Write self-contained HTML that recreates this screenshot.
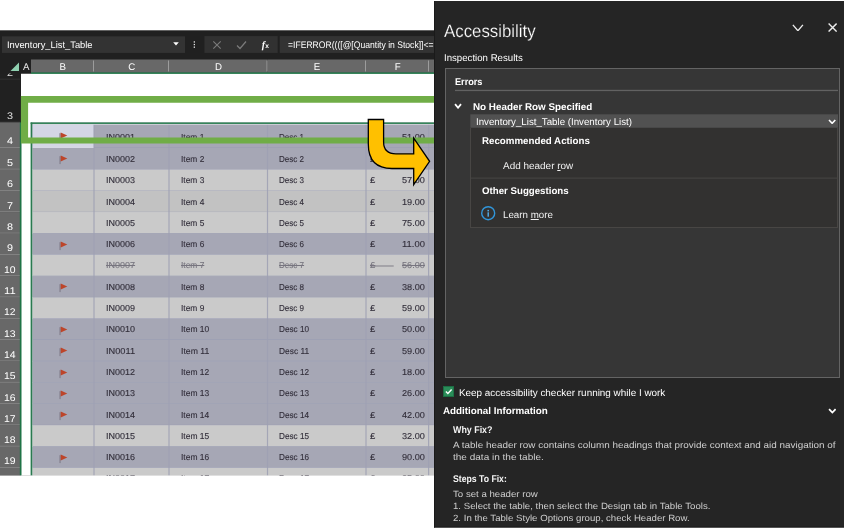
<!DOCTYPE html><html><head><meta charset="utf-8"><title>Accessibility</title><style>
html,body{margin:0;padding:0;background:#fff}body{width:844px;height:529px;position:relative;overflow:hidden;font-family:"Liberation Sans",sans-serif}
#r{position:absolute;left:0;top:0;width:844px;height:529px;overflow:hidden;will-change:transform}#r>div,#r>svg,#r>span{position:absolute;display:block}
#r>span{white-space:nowrap;line-height:1;transform-origin:0 0;text-rendering:geometricPrecision}
u{text-decoration:underline;text-underline-offset:1px}
</style></head><body><div id="r">
<svg style="left:0;top:0" width="844" height="529" viewBox="0 0 844 529">
<rect x="0" y="30.3" width="434" height="445.3" fill="#202020"/>
<rect x="21" y="73.5" width="413" height="402.1" fill="#fff"/>
<rect x="2" y="36.3" width="183" height="16.6" fill="#333"/>
<rect x="204.4" y="36.1" width="73.3" height="16.8" fill="#313131"/>
<rect x="279.7" y="36.1" width="154.3" height="16.8" fill="#333"/>
<rect x="0" y="58.2" width="20" height="21.3" fill="#212121"/>
<rect x="0" y="78.8" width="20" height="1" fill="#3c3c3c"/>
<rect x="0" y="79.5" width="20" height="42.9" fill="#212121"/>
<rect x="0" y="121.7" width="20" height="1" fill="#3c3c3c"/>
<rect x="0" y="122.4" width="20" height="25.6" fill="#686868"/>
<rect x="0" y="147.3" width="20" height="1" fill="#8e8e8e"/>
<rect x="0" y="148" width="20" height="21.5" fill="#686868"/>
<rect x="0" y="168.8" width="20" height="1" fill="#8e8e8e"/>
<rect x="0" y="169.5" width="20" height="21.31" fill="#686868"/>
<rect x="0" y="190.11" width="20" height="1" fill="#8e8e8e"/>
<rect x="0" y="190.81" width="20" height="21.31" fill="#686868"/>
<rect x="0" y="211.42" width="20" height="1" fill="#8e8e8e"/>
<rect x="0" y="212.12" width="20" height="21.31" fill="#686868"/>
<rect x="0" y="232.73" width="20" height="1" fill="#8e8e8e"/>
<rect x="0" y="233.43" width="20" height="21.31" fill="#686868"/>
<rect x="0" y="254.04" width="20" height="1" fill="#8e8e8e"/>
<rect x="0" y="254.74" width="20" height="21.31" fill="#686868"/>
<rect x="0" y="275.35" width="20" height="1" fill="#8e8e8e"/>
<rect x="0" y="276.05" width="20" height="21.31" fill="#686868"/>
<rect x="0" y="296.66" width="20" height="1" fill="#8e8e8e"/>
<rect x="0" y="297.36" width="20" height="21.31" fill="#686868"/>
<rect x="0" y="317.97" width="20" height="1" fill="#8e8e8e"/>
<rect x="0" y="318.67" width="20" height="21.31" fill="#686868"/>
<rect x="0" y="339.28" width="20" height="1" fill="#8e8e8e"/>
<rect x="0" y="339.98" width="20" height="21.31" fill="#686868"/>
<rect x="0" y="360.59" width="20" height="1" fill="#8e8e8e"/>
<rect x="0" y="361.29" width="20" height="21.31" fill="#686868"/>
<rect x="0" y="381.9" width="20" height="1" fill="#8e8e8e"/>
<rect x="0" y="382.6" width="20" height="21.31" fill="#686868"/>
<rect x="0" y="403.21" width="20" height="1" fill="#8e8e8e"/>
<rect x="0" y="403.91" width="20" height="21.31" fill="#686868"/>
<rect x="0" y="424.52" width="20" height="1" fill="#8e8e8e"/>
<rect x="0" y="425.22" width="20" height="21.31" fill="#686868"/>
<rect x="0" y="445.83" width="20" height="1" fill="#8e8e8e"/>
<rect x="0" y="446.53" width="20" height="21.31" fill="#686868"/>
<rect x="0" y="467.14" width="20" height="1" fill="#8e8e8e"/>
<rect x="0" y="467.84" width="20" height="21.31" fill="#686868"/>
<rect x="0" y="488.45" width="20" height="1" fill="#8e8e8e"/>
<rect x="19.8" y="122.4" width="1.7" height="353.2" fill="#1f7346"/>
<rect x="32.3" y="122.4" width="401.7" height="25.6" fill="#a6a7b5"/>
<rect x="33" y="147.6" width="401" height="1" fill="#969ab2"/>
<rect x="32.3" y="148" width="401.7" height="21.5" fill="#a6a7b5"/>
<rect x="33" y="169.1" width="401" height="1" fill="#969ab2"/>
<rect x="32.3" y="169.5" width="401.7" height="21.31" fill="#cacaca"/>
<rect x="33" y="190.41" width="401" height="1" fill="#a3a6b8"/>
<rect x="32.3" y="190.81" width="401.7" height="21.31" fill="#c2c2c2"/>
<rect x="33" y="211.72" width="401" height="1" fill="#a3a6b8"/>
<rect x="32.3" y="212.12" width="401.7" height="21.31" fill="#cacaca"/>
<rect x="33" y="233.03" width="401" height="1" fill="#a3a6b8"/>
<rect x="32.3" y="233.43" width="401.7" height="21.31" fill="#a6a7b5"/>
<rect x="33" y="254.34" width="401" height="1" fill="#969ab2"/>
<rect x="32.3" y="254.74" width="401.7" height="21.31" fill="#cacaca"/>
<rect x="33" y="275.65" width="401" height="1" fill="#a3a6b8"/>
<rect x="32.3" y="276.05" width="401.7" height="21.31" fill="#a6a7b5"/>
<rect x="33" y="296.96" width="401" height="1" fill="#969ab2"/>
<rect x="32.3" y="297.36" width="401.7" height="21.31" fill="#cacaca"/>
<rect x="33" y="318.27" width="401" height="1" fill="#a3a6b8"/>
<rect x="32.3" y="318.67" width="401.7" height="21.31" fill="#a6a7b5"/>
<rect x="33" y="339.58" width="401" height="1" fill="#969ab2"/>
<rect x="32.3" y="339.98" width="401.7" height="21.31" fill="#a6a7b5"/>
<rect x="33" y="360.89" width="401" height="1" fill="#969ab2"/>
<rect x="32.3" y="361.29" width="401.7" height="21.31" fill="#a6a7b5"/>
<rect x="33" y="382.2" width="401" height="1" fill="#969ab2"/>
<rect x="32.3" y="382.6" width="401.7" height="21.31" fill="#a6a7b5"/>
<rect x="33" y="403.51" width="401" height="1" fill="#969ab2"/>
<rect x="32.3" y="403.91" width="401.7" height="21.31" fill="#a6a7b5"/>
<rect x="33" y="424.82" width="401" height="1" fill="#969ab2"/>
<rect x="32.3" y="425.22" width="401.7" height="21.31" fill="#cacaca"/>
<rect x="33" y="446.13" width="401" height="1" fill="#a3a6b8"/>
<rect x="32.3" y="446.53" width="401.7" height="21.31" fill="#a6a7b5"/>
<rect x="33" y="467.44" width="401" height="1" fill="#969ab2"/>
<rect x="32.3" y="467.84" width="401.7" height="21.31" fill="#cacaca"/>
<rect x="33" y="488.75" width="401" height="1" fill="#a3a6b8"/>
<rect x="32.3" y="124.4" width="61.7" height="22.4" fill="#d4d6e5"/>
<rect x="32.3" y="146.6" width="61.7" height="1.2" fill="#e4e5f0"/>
<rect x="93.4" y="124" width="1.2" height="351.6" fill="#9da0b3" opacity=".85"/>
<rect x="168.4" y="124" width="1.2" height="351.6" fill="#9da0b3" opacity=".85"/>
<rect x="266.9" y="124" width="1.2" height="351.6" fill="#9da0b3" opacity=".85"/>
<rect x="365.4" y="124" width="1.2" height="351.6" fill="#9da0b3" opacity=".85"/>
<rect x="428" y="124" width="1.2" height="351.6" fill="#9da0b3" opacity=".85"/>
<rect x="30.6" y="122.4" width="403.4" height="1.6" fill="#35855a"/>
<rect x="30.6" y="122.4" width="1.7" height="353.2" fill="#2a7a50"/>
<rect x="33" y="124.3" width="401" height="0.6" fill="#e4e4ea"/>
</svg>
<svg style="left:58.9px;top:131.90px" width="9.5" height="10" viewBox="0 0 9.5 10"><rect x="0.4" y="1.2" width="1.3" height="7.9" fill="#85828f"/><path d="M1.7 0.5 L8.3 3.5 L1.7 6.6 Z" fill="#bd452a"/></svg>
<svg style="left:58.9px;top:155.40px" width="9.5" height="10" viewBox="0 0 9.5 10"><rect x="0.4" y="1.2" width="1.3" height="7.9" fill="#85828f"/><path d="M1.7 0.5 L8.3 3.5 L1.7 6.6 Z" fill="#bd452a"/></svg>
<svg style="left:58.9px;top:240.74px" width="9.5" height="10" viewBox="0 0 9.5 10"><rect x="0.4" y="1.2" width="1.3" height="7.9" fill="#85828f"/><path d="M1.7 0.5 L8.3 3.5 L1.7 6.6 Z" fill="#bd452a"/></svg>
<svg style="left:58.9px;top:283.36px" width="9.5" height="10" viewBox="0 0 9.5 10"><rect x="0.4" y="1.2" width="1.3" height="7.9" fill="#85828f"/><path d="M1.7 0.5 L8.3 3.5 L1.7 6.6 Z" fill="#bd452a"/></svg>
<svg style="left:58.9px;top:325.97px" width="9.5" height="10" viewBox="0 0 9.5 10"><rect x="0.4" y="1.2" width="1.3" height="7.9" fill="#85828f"/><path d="M1.7 0.5 L8.3 3.5 L1.7 6.6 Z" fill="#bd452a"/></svg>
<svg style="left:58.9px;top:347.28px" width="9.5" height="10" viewBox="0 0 9.5 10"><rect x="0.4" y="1.2" width="1.3" height="7.9" fill="#85828f"/><path d="M1.7 0.5 L8.3 3.5 L1.7 6.6 Z" fill="#bd452a"/></svg>
<svg style="left:58.9px;top:368.59px" width="9.5" height="10" viewBox="0 0 9.5 10"><rect x="0.4" y="1.2" width="1.3" height="7.9" fill="#85828f"/><path d="M1.7 0.5 L8.3 3.5 L1.7 6.6 Z" fill="#bd452a"/></svg>
<svg style="left:58.9px;top:389.90px" width="9.5" height="10" viewBox="0 0 9.5 10"><rect x="0.4" y="1.2" width="1.3" height="7.9" fill="#85828f"/><path d="M1.7 0.5 L8.3 3.5 L1.7 6.6 Z" fill="#bd452a"/></svg>
<svg style="left:58.9px;top:411.21px" width="9.5" height="10" viewBox="0 0 9.5 10"><rect x="0.4" y="1.2" width="1.3" height="7.9" fill="#85828f"/><path d="M1.7 0.5 L8.3 3.5 L1.7 6.6 Z" fill="#bd452a"/></svg>
<svg style="left:58.9px;top:453.83px" width="9.5" height="10" viewBox="0 0 9.5 10"><rect x="0.4" y="1.2" width="1.3" height="7.9" fill="#85828f"/><path d="M1.7 0.5 L8.3 3.5 L1.7 6.6 Z" fill="#bd452a"/></svg>
<span style="left:105.5px;top:133.00px;font-size:8.6px;font-weight:400;color:#332f3b;transform:scaleX(1.0498);-webkit-text-stroke:0.12px #332f3b;">IN0001</span>
<span style="left:180.6px;top:133.00px;font-size:8.6px;font-weight:400;color:#332f3b;transform:scaleX(0.9753);-webkit-text-stroke:0.12px #332f3b;">Item 1</span>
<span style="left:278.8px;top:133.00px;font-size:8.6px;font-weight:400;color:#332f3b;transform:scaleX(0.9383);-webkit-text-stroke:0.12px #332f3b;">Desc 1</span>
<span style="left:370.3px;top:133.00px;font-size:8.6px;font-weight:400;color:#332f3b;transform:scaleX(1.1085);-webkit-text-stroke:0.12px #332f3b;">£</span>
<span style="left:402.3px;top:133.00px;font-size:8.6px;font-weight:400;color:#332f3b;transform:scaleX(1.0643);-webkit-text-stroke:0.12px #332f3b;">51.00</span>
<span style="left:105.5px;top:155.00px;font-size:8.6px;font-weight:400;color:#332f3b;transform:scaleX(1.0498);-webkit-text-stroke:0.12px #332f3b;">IN0002</span>
<span style="left:180.6px;top:155.00px;font-size:8.6px;font-weight:400;color:#332f3b;transform:scaleX(0.9753);-webkit-text-stroke:0.12px #332f3b;">Item 2</span>
<span style="left:278.8px;top:155.00px;font-size:8.6px;font-weight:400;color:#332f3b;transform:scaleX(0.9383);-webkit-text-stroke:0.12px #332f3b;">Desc 2</span>
<span style="left:370.3px;top:155.00px;font-size:8.6px;font-weight:400;color:#332f3b;transform:scaleX(1.1085);-webkit-text-stroke:0.12px #332f3b;">£</span>
<span style="left:105.5px;top:176.00px;font-size:8.6px;font-weight:400;color:#332f3b;transform:scaleX(1.0498);-webkit-text-stroke:0.12px #332f3b;">IN0003</span>
<span style="left:180.6px;top:176.00px;font-size:8.6px;font-weight:400;color:#332f3b;transform:scaleX(0.9753);-webkit-text-stroke:0.12px #332f3b;">Item 3</span>
<span style="left:278.8px;top:176.00px;font-size:8.6px;font-weight:400;color:#332f3b;transform:scaleX(0.9383);-webkit-text-stroke:0.12px #332f3b;">Desc 3</span>
<span style="left:370.3px;top:176.00px;font-size:8.6px;font-weight:400;color:#332f3b;transform:scaleX(1.1085);-webkit-text-stroke:0.12px #332f3b;">£</span>
<span style="left:402.3px;top:176.00px;font-size:8.6px;font-weight:400;color:#332f3b;transform:scaleX(1.0643);-webkit-text-stroke:0.12px #332f3b;">57.00</span>
<span style="left:105.5px;top:198.00px;font-size:8.6px;font-weight:400;color:#332f3b;transform:scaleX(1.0498);-webkit-text-stroke:0.12px #332f3b;">IN0004</span>
<span style="left:180.6px;top:198.00px;font-size:8.6px;font-weight:400;color:#332f3b;transform:scaleX(0.9753);-webkit-text-stroke:0.12px #332f3b;">Item 4</span>
<span style="left:278.8px;top:198.00px;font-size:8.6px;font-weight:400;color:#332f3b;transform:scaleX(0.9383);-webkit-text-stroke:0.12px #332f3b;">Desc 4</span>
<span style="left:370.3px;top:198.00px;font-size:8.6px;font-weight:400;color:#332f3b;transform:scaleX(1.1085);-webkit-text-stroke:0.12px #332f3b;">£</span>
<span style="left:402.3px;top:198.00px;font-size:8.6px;font-weight:400;color:#332f3b;transform:scaleX(1.0643);-webkit-text-stroke:0.12px #332f3b;">19.00</span>
<span style="left:105.5px;top:219.00px;font-size:8.6px;font-weight:400;color:#332f3b;transform:scaleX(1.0498);-webkit-text-stroke:0.12px #332f3b;">IN0005</span>
<span style="left:180.6px;top:219.00px;font-size:8.6px;font-weight:400;color:#332f3b;transform:scaleX(0.9753);-webkit-text-stroke:0.12px #332f3b;">Item 5</span>
<span style="left:278.8px;top:219.00px;font-size:8.6px;font-weight:400;color:#332f3b;transform:scaleX(0.9383);-webkit-text-stroke:0.12px #332f3b;">Desc 5</span>
<span style="left:370.3px;top:219.00px;font-size:8.6px;font-weight:400;color:#332f3b;transform:scaleX(1.1085);-webkit-text-stroke:0.12px #332f3b;">£</span>
<span style="left:402.3px;top:219.00px;font-size:8.6px;font-weight:400;color:#332f3b;transform:scaleX(1.0643);-webkit-text-stroke:0.12px #332f3b;">75.00</span>
<span style="left:105.5px;top:240.00px;font-size:8.6px;font-weight:400;color:#332f3b;transform:scaleX(1.0498);-webkit-text-stroke:0.12px #332f3b;">IN0006</span>
<span style="left:180.6px;top:240.00px;font-size:8.6px;font-weight:400;color:#332f3b;transform:scaleX(0.9753);-webkit-text-stroke:0.12px #332f3b;">Item 6</span>
<span style="left:278.8px;top:240.00px;font-size:8.6px;font-weight:400;color:#332f3b;transform:scaleX(0.9383);-webkit-text-stroke:0.12px #332f3b;">Desc 6</span>
<span style="left:370.3px;top:240.00px;font-size:8.6px;font-weight:400;color:#332f3b;transform:scaleX(1.1085);-webkit-text-stroke:0.12px #332f3b;">£</span>
<span style="left:402.3px;top:240.00px;font-size:8.6px;font-weight:400;color:#332f3b;transform:scaleX(1.0970);-webkit-text-stroke:0.12px #332f3b;">11.00</span>
<span style="left:105.5px;top:261.00px;font-size:8.6px;font-weight:400;color:#77757f;transform:scaleX(1.0498);text-decoration:line-through;-webkit-text-stroke:0.12px #77757f;">IN0007</span>
<span style="left:180.6px;top:261.00px;font-size:8.6px;font-weight:400;color:#77757f;transform:scaleX(0.9753);text-decoration:line-through;-webkit-text-stroke:0.12px #77757f;">Item 7</span>
<span style="left:278.8px;top:261.00px;font-size:8.6px;font-weight:400;color:#77757f;transform:scaleX(0.9383);text-decoration:line-through;-webkit-text-stroke:0.12px #77757f;">Desc 7</span>
<span style="left:370.3px;top:261.00px;font-size:8.6px;font-weight:400;color:#77757f;transform:scaleX(1.1085);text-decoration:line-through;-webkit-text-stroke:0.12px #77757f;">£</span>
<span style="left:402.3px;top:261.00px;font-size:8.6px;font-weight:400;color:#77757f;transform:scaleX(1.0643);text-decoration:line-through;-webkit-text-stroke:0.12px #77757f;">56.00</span>
<svg style="left:0;top:0" width="844" height="529" viewBox="0 0 844 529">
<rect x="370.4" y="265.545" width="23.3" height="0.9" fill="#77757f"/>
</svg>
<span style="left:105.5px;top:283.00px;font-size:8.6px;font-weight:400;color:#332f3b;transform:scaleX(1.0498);-webkit-text-stroke:0.12px #332f3b;">IN0008</span>
<span style="left:180.6px;top:283.00px;font-size:8.6px;font-weight:400;color:#332f3b;transform:scaleX(0.9753);-webkit-text-stroke:0.12px #332f3b;">Item 8</span>
<span style="left:278.8px;top:283.00px;font-size:8.6px;font-weight:400;color:#332f3b;transform:scaleX(0.9383);-webkit-text-stroke:0.12px #332f3b;">Desc 8</span>
<span style="left:370.3px;top:283.00px;font-size:8.6px;font-weight:400;color:#332f3b;transform:scaleX(1.1085);-webkit-text-stroke:0.12px #332f3b;">£</span>
<span style="left:402.3px;top:283.00px;font-size:8.6px;font-weight:400;color:#332f3b;transform:scaleX(1.0643);-webkit-text-stroke:0.12px #332f3b;">38.00</span>
<span style="left:105.5px;top:304.00px;font-size:8.6px;font-weight:400;color:#332f3b;transform:scaleX(1.0498);-webkit-text-stroke:0.12px #332f3b;">IN0009</span>
<span style="left:180.6px;top:304.00px;font-size:8.6px;font-weight:400;color:#332f3b;transform:scaleX(0.9753);-webkit-text-stroke:0.12px #332f3b;">Item 9</span>
<span style="left:278.8px;top:304.00px;font-size:8.6px;font-weight:400;color:#332f3b;transform:scaleX(0.9383);-webkit-text-stroke:0.12px #332f3b;">Desc 9</span>
<span style="left:370.3px;top:304.00px;font-size:8.6px;font-weight:400;color:#332f3b;transform:scaleX(1.1085);-webkit-text-stroke:0.12px #332f3b;">£</span>
<span style="left:402.3px;top:304.00px;font-size:8.6px;font-weight:400;color:#332f3b;transform:scaleX(1.0643);-webkit-text-stroke:0.12px #332f3b;">59.00</span>
<span style="left:105.5px;top:325.00px;font-size:8.6px;font-weight:400;color:#332f3b;transform:scaleX(1.0498);-webkit-text-stroke:0.12px #332f3b;">IN0010</span>
<span style="left:180.6px;top:325.00px;font-size:8.6px;font-weight:400;color:#332f3b;transform:scaleX(0.9870);-webkit-text-stroke:0.12px #332f3b;">Item 10</span>
<span style="left:278.8px;top:325.00px;font-size:8.6px;font-weight:400;color:#332f3b;transform:scaleX(0.9546);-webkit-text-stroke:0.12px #332f3b;">Desc 10</span>
<span style="left:370.3px;top:325.00px;font-size:8.6px;font-weight:400;color:#332f3b;transform:scaleX(1.1085);-webkit-text-stroke:0.12px #332f3b;">£</span>
<span style="left:402.3px;top:325.00px;font-size:8.6px;font-weight:400;color:#332f3b;transform:scaleX(1.0643);-webkit-text-stroke:0.12px #332f3b;">50.00</span>
<span style="left:105.5px;top:347.00px;font-size:8.6px;font-weight:400;color:#332f3b;transform:scaleX(1.0747);-webkit-text-stroke:0.12px #332f3b;">IN0011</span>
<span style="left:180.6px;top:347.00px;font-size:8.6px;font-weight:400;color:#332f3b;transform:scaleX(1.0096);-webkit-text-stroke:0.12px #332f3b;">Item 11</span>
<span style="left:278.8px;top:347.00px;font-size:8.6px;font-weight:400;color:#332f3b;transform:scaleX(0.9744);-webkit-text-stroke:0.12px #332f3b;">Desc 11</span>
<span style="left:370.3px;top:347.00px;font-size:8.6px;font-weight:400;color:#332f3b;transform:scaleX(1.1085);-webkit-text-stroke:0.12px #332f3b;">£</span>
<span style="left:402.3px;top:347.00px;font-size:8.6px;font-weight:400;color:#332f3b;transform:scaleX(1.0643);-webkit-text-stroke:0.12px #332f3b;">59.00</span>
<span style="left:105.5px;top:368.00px;font-size:8.6px;font-weight:400;color:#332f3b;transform:scaleX(1.0498);-webkit-text-stroke:0.12px #332f3b;">IN0012</span>
<span style="left:180.6px;top:368.00px;font-size:8.6px;font-weight:400;color:#332f3b;transform:scaleX(0.9870);-webkit-text-stroke:0.12px #332f3b;">Item 12</span>
<span style="left:278.8px;top:368.00px;font-size:8.6px;font-weight:400;color:#332f3b;transform:scaleX(0.9546);-webkit-text-stroke:0.12px #332f3b;">Desc 12</span>
<span style="left:370.3px;top:368.00px;font-size:8.6px;font-weight:400;color:#332f3b;transform:scaleX(1.1085);-webkit-text-stroke:0.12px #332f3b;">£</span>
<span style="left:402.3px;top:368.00px;font-size:8.6px;font-weight:400;color:#332f3b;transform:scaleX(1.0643);-webkit-text-stroke:0.12px #332f3b;">18.00</span>
<span style="left:105.5px;top:389.00px;font-size:8.6px;font-weight:400;color:#332f3b;transform:scaleX(1.0498);-webkit-text-stroke:0.12px #332f3b;">IN0013</span>
<span style="left:180.6px;top:389.00px;font-size:8.6px;font-weight:400;color:#332f3b;transform:scaleX(0.9870);-webkit-text-stroke:0.12px #332f3b;">Item 13</span>
<span style="left:278.8px;top:389.00px;font-size:8.6px;font-weight:400;color:#332f3b;transform:scaleX(0.9546);-webkit-text-stroke:0.12px #332f3b;">Desc 13</span>
<span style="left:370.3px;top:389.00px;font-size:8.6px;font-weight:400;color:#332f3b;transform:scaleX(1.1085);-webkit-text-stroke:0.12px #332f3b;">£</span>
<span style="left:402.3px;top:389.00px;font-size:8.6px;font-weight:400;color:#332f3b;transform:scaleX(1.0643);-webkit-text-stroke:0.12px #332f3b;">26.00</span>
<span style="left:105.5px;top:411.00px;font-size:8.6px;font-weight:400;color:#332f3b;transform:scaleX(1.0498);-webkit-text-stroke:0.12px #332f3b;">IN0014</span>
<span style="left:180.6px;top:411.00px;font-size:8.6px;font-weight:400;color:#332f3b;transform:scaleX(0.9870);-webkit-text-stroke:0.12px #332f3b;">Item 14</span>
<span style="left:278.8px;top:411.00px;font-size:8.6px;font-weight:400;color:#332f3b;transform:scaleX(0.9546);-webkit-text-stroke:0.12px #332f3b;">Desc 14</span>
<span style="left:370.3px;top:411.00px;font-size:8.6px;font-weight:400;color:#332f3b;transform:scaleX(1.1085);-webkit-text-stroke:0.12px #332f3b;">£</span>
<span style="left:402.3px;top:411.00px;font-size:8.6px;font-weight:400;color:#332f3b;transform:scaleX(1.0643);-webkit-text-stroke:0.12px #332f3b;">42.00</span>
<span style="left:105.5px;top:432.00px;font-size:8.6px;font-weight:400;color:#332f3b;transform:scaleX(1.0498);-webkit-text-stroke:0.12px #332f3b;">IN0015</span>
<span style="left:180.6px;top:432.00px;font-size:8.6px;font-weight:400;color:#332f3b;transform:scaleX(0.9870);-webkit-text-stroke:0.12px #332f3b;">Item 15</span>
<span style="left:278.8px;top:432.00px;font-size:8.6px;font-weight:400;color:#332f3b;transform:scaleX(0.9546);-webkit-text-stroke:0.12px #332f3b;">Desc 15</span>
<span style="left:370.3px;top:432.00px;font-size:8.6px;font-weight:400;color:#332f3b;transform:scaleX(1.1085);-webkit-text-stroke:0.12px #332f3b;">£</span>
<span style="left:402.3px;top:432.00px;font-size:8.6px;font-weight:400;color:#332f3b;transform:scaleX(1.0643);-webkit-text-stroke:0.12px #332f3b;">32.00</span>
<span style="left:105.5px;top:453.00px;font-size:8.6px;font-weight:400;color:#332f3b;transform:scaleX(1.0498);-webkit-text-stroke:0.12px #332f3b;">IN0016</span>
<span style="left:180.6px;top:453.00px;font-size:8.6px;font-weight:400;color:#332f3b;transform:scaleX(0.9870);-webkit-text-stroke:0.12px #332f3b;">Item 16</span>
<span style="left:278.8px;top:453.00px;font-size:8.6px;font-weight:400;color:#332f3b;transform:scaleX(0.9546);-webkit-text-stroke:0.12px #332f3b;">Desc 16</span>
<span style="left:370.3px;top:453.00px;font-size:8.6px;font-weight:400;color:#332f3b;transform:scaleX(1.1085);-webkit-text-stroke:0.12px #332f3b;">£</span>
<span style="left:402.3px;top:453.00px;font-size:8.6px;font-weight:400;color:#332f3b;transform:scaleX(1.0643);-webkit-text-stroke:0.12px #332f3b;">90.00</span>
<span style="left:105.5px;top:474.00px;font-size:8.6px;font-weight:400;color:#332f3b;transform:scaleX(1.0498);-webkit-text-stroke:0.12px #332f3b;">IN0017</span>
<span style="left:180.6px;top:474.00px;font-size:8.6px;font-weight:400;color:#332f3b;transform:scaleX(0.9870);-webkit-text-stroke:0.12px #332f3b;">Item 17</span>
<span style="left:278.8px;top:474.00px;font-size:8.6px;font-weight:400;color:#332f3b;transform:scaleX(0.9546);-webkit-text-stroke:0.12px #332f3b;">Desc 17</span>
<span style="left:370.3px;top:474.00px;font-size:8.6px;font-weight:400;color:#332f3b;transform:scaleX(1.1085);-webkit-text-stroke:0.12px #332f3b;">£</span>
<span style="left:402.3px;top:474.00px;font-size:8.6px;font-weight:400;color:#332f3b;transform:scaleX(1.0643);-webkit-text-stroke:0.12px #332f3b;">25.00</span>
<span style="left:6.9px;top:69.00px;font-size:9.7px;font-weight:400;color:#e0e0e0;transform:scaleX(1.1130);">2</span>
<span style="left:6.9px;top:112.00px;font-size:9.7px;font-weight:400;color:#e0e0e0;transform:scaleX(1.1130);">3</span>
<span style="left:6.9px;top:137.00px;font-size:9.7px;font-weight:400;color:#fff;transform:scaleX(1.1130);">4</span>
<span style="left:6.9px;top:159.00px;font-size:9.7px;font-weight:400;color:#fff;transform:scaleX(1.1130);">5</span>
<span style="left:6.9px;top:180.00px;font-size:9.7px;font-weight:400;color:#fff;transform:scaleX(1.1130);">6</span>
<span style="left:6.9px;top:202.00px;font-size:9.7px;font-weight:400;color:#fff;transform:scaleX(1.1130);">7</span>
<span style="left:6.9px;top:223.00px;font-size:9.7px;font-weight:400;color:#fff;transform:scaleX(1.1130);">8</span>
<span style="left:6.9px;top:244.00px;font-size:9.7px;font-weight:400;color:#fff;transform:scaleX(1.1130);">9</span>
<span style="left:4.1000000000000005px;top:266.00px;font-size:9.7px;font-weight:400;color:#fff;transform:scaleX(1.0759);">10</span>
<span style="left:4.1000000000000005px;top:287.00px;font-size:9.7px;font-weight:400;color:#fff;transform:scaleX(1.1528);">11</span>
<span style="left:4.1000000000000005px;top:308.00px;font-size:9.7px;font-weight:400;color:#fff;transform:scaleX(1.0759);">12</span>
<span style="left:4.1000000000000005px;top:330.00px;font-size:9.7px;font-weight:400;color:#fff;transform:scaleX(1.0759);">13</span>
<span style="left:4.1000000000000005px;top:351.00px;font-size:9.7px;font-weight:400;color:#fff;transform:scaleX(1.0759);">14</span>
<span style="left:4.1000000000000005px;top:372.00px;font-size:9.7px;font-weight:400;color:#fff;transform:scaleX(1.0759);">15</span>
<span style="left:4.1000000000000005px;top:394.00px;font-size:9.7px;font-weight:400;color:#fff;transform:scaleX(1.0759);">16</span>
<span style="left:4.1000000000000005px;top:415.00px;font-size:9.7px;font-weight:400;color:#fff;transform:scaleX(1.0759);">17</span>
<span style="left:4.1000000000000005px;top:436.00px;font-size:9.7px;font-weight:400;color:#fff;transform:scaleX(1.0759);">18</span>
<span style="left:4.1000000000000005px;top:457.00px;font-size:9.7px;font-weight:400;color:#fff;transform:scaleX(1.0759);">19</span>
<svg style="left:0;top:0" width="844" height="529" viewBox="0 0 844 529">
<rect x="0" y="53" width="434" height="20.5" fill="#202020"/>
<rect x="21" y="59.5" width="10" height="13" fill="#212121"/>
<rect x="31" y="59.5" width="63" height="13" fill="#686868"/>
<rect x="93" y="60.5" width="1.2" height="11" fill="#9c9c9c"/>
<rect x="94" y="59.5" width="75" height="13" fill="#686868"/>
<rect x="168" y="60.5" width="1.2" height="11" fill="#9c9c9c"/>
<rect x="169" y="59.5" width="98.5" height="13" fill="#686868"/>
<rect x="266.5" y="60.5" width="1.2" height="11" fill="#9c9c9c"/>
<rect x="267.5" y="59.5" width="98.5" height="13" fill="#686868"/>
<rect x="365" y="60.5" width="1.2" height="11" fill="#9c9c9c"/>
<rect x="366" y="59.5" width="63" height="13" fill="#686868"/>
<rect x="428" y="60.5" width="1.2" height="11" fill="#9c9c9c"/>
<rect x="429" y="59.5" width="7" height="13" fill="#686868"/>
<rect x="435" y="60.5" width="1.2" height="11" fill="#9c9c9c"/>
<rect x="31" y="72.4" width="403" height="1.5" fill="#338a5b"/>
</svg>
<svg style="left:10px;top:62px" width="10" height="10" viewBox="0 0 10 10"><path d="M9 0.5 L9 9 L0.5 9 Z" fill="#8fd0b0"/></svg>
<span style="left:26.3px;top:63.00px;font-size:9.7px;font-weight:400;color:#e6e6e6;transform:translateX(-50%);">A</span>
<span style="left:62.8px;top:63.00px;font-size:9.7px;font-weight:400;color:#fff;transform:translateX(-50%);">B</span>
<span style="left:131.8px;top:63.00px;font-size:9.7px;font-weight:400;color:#fff;transform:translateX(-50%);">C</span>
<span style="left:218.55px;top:63.00px;font-size:9.7px;font-weight:400;color:#fff;transform:translateX(-50%);">D</span>
<span style="left:317.05px;top:63.00px;font-size:9.7px;font-weight:400;color:#fff;transform:translateX(-50%);">E</span>
<span style="left:397.8px;top:63.00px;font-size:9.7px;font-weight:400;color:#fff;transform:translateX(-50%);">F</span>
<span style="left:6.6px;top:41.00px;font-size:9.5px;font-weight:400;color:#fff;transform:scaleX(0.9812);">Inventory_List_Table</span>
<span style="left:287.5px;top:41.00px;font-size:9.5px;font-weight:400;color:#fff;transform:scaleX(0.9043);">=IFERROR((([@[Quantity in Stock]]&lt;=</span>
<svg style="left:173px;top:42.4px" width="6" height="4" viewBox="0 0 6 4"><path d="M0.2 0.3 L5.8 0.3 L3 3.6 Z" fill="#fff"/></svg>
<svg style="left:0;top:0" width="844" height="529" viewBox="0 0 844 529">
<rect x="193.7" y="41.3" width="1.3" height="1.3" fill="#e8e8e8"/>
<rect x="193.7" y="43.9" width="1.3" height="1.3" fill="#e8e8e8"/>
<rect x="193.7" y="46.5" width="1.3" height="1.3" fill="#e8e8e8"/>
</svg>
<svg style="left:212.2px;top:39.6px" width="10" height="10" viewBox="0 0 10 10"><path d="M1.3 1.3 L8.7 8.7 M8.7 1.3 L1.3 8.7" stroke="#7b7b7b" stroke-width="1.1" fill="none"/></svg>
<svg style="left:236px;top:39.5px" width="11" height="10" viewBox="0 0 11 10"><path d="M1 5.5 L4 8.5 L10 1.5" stroke="#7b7b7b" stroke-width="1.2" fill="none"/></svg>
<span style="left:261.8px;top:41.00px;font-size:10px;font-weight:700;color:#fff;font-style:italic;font-family:'Liberation Serif',serif;">f</span>
<span style="left:265.2px;top:44.00px;font-size:6.6px;font-weight:700;color:#fff;">x</span>
<svg style="left:0;top:0" width="844" height="529" viewBox="0 0 844 529"><path d="M20.9 96 H450 V143.6 H20.9 Z M28.1 102.8 V137.5 H450 V102.8 Z" fill="#70ad47" fill-rule="evenodd"/></svg>
<svg style="left:360px;top:112px" width="80" height="80" viewBox="360 112 80 80">
<path d="M368.3 119.5 L383.6 119.5 L383.6 142 Q383.6 153.8 396 153.8 L413.7 153.8 L413.7 138.2 L429.6 161.3 L413.7 184.6 L413.7 168.5 L392 168.5 Q368.3 168.5 368.3 144 Z" fill="#ffc000" stroke="#000" stroke-width="1.3" stroke-linejoin="miter"/>
</svg>
<svg style="left:0;top:0" width="844" height="529" viewBox="0 0 844 529">
<rect x="0" y="475.6" width="434" height="53.4" fill="#fff"/>
<rect x="434" y="1" width="410" height="526.5" fill="#252525"/>
<rect x="434" y="1" width="1" height="526.5" fill="#1a1a1a"/>
<rect x="434" y="526.7" width="410" height="0.8" fill="#1a1a1a"/>
</svg>
<div style="left:445px;top:68px;width:394.5px;height:310px;box-sizing:border-box;background:#363636;border:1px solid #646464"></div>
<svg style="left:0;top:0" width="844" height="529" viewBox="0 0 844 529">
<rect x="455" y="89.8" width="383" height="1.3" fill="#626262"/>
<rect x="470.3" y="114.3" width="367.7" height="13.4" fill="#515151"/>
</svg>
<div style="left:470.3px;top:127.6px;width:367.7px;height:100px;box-sizing:border-box;background:#323130;border:1px solid #484644;border-top:none"></div>
<svg style="left:0;top:0" width="844" height="529" viewBox="0 0 844 529">
<rect x="471" y="177.6" width="366.5" height="1" fill="#484644"/>
</svg>
<span style="left:443.7px;top:23.00px;font-size:17.8px;font-weight:400;color:#fff;transform:scaleX(0.9459);-webkit-text-stroke:0.22px #252525;">Accessibility</span>
<span style="left:444.1px;top:54.00px;font-size:9.8px;font-weight:400;color:#fff;transform:scaleX(0.9842);">Inspection Results</span>
<span style="left:455px;top:78.00px;font-size:9.8px;font-weight:700;color:#fff;transform:scaleX(0.9318);">Errors</span>
<span style="left:473.3px;top:103.00px;font-size:9.8px;font-weight:700;color:#fff;transform:scaleX(1.0052);">No Header Row Specified</span>
<span style="left:476px;top:118.00px;font-size:9.8px;font-weight:400;color:#fff;transform:scaleX(0.9913);">Inventory_List_Table (Inventory List)</span>
<span style="left:482.2px;top:137.00px;font-size:9.8px;font-weight:700;color:#fff;transform:scaleX(0.9934);">Recommended Actions</span>
<span style="left:502.7px;top:162.00px;font-size:9.8px;font-weight:400;color:#f0f0f0;transform:scaleX(1.0161);">Add header <u>r</u>ow</span>
<span style="left:482.2px;top:187.00px;font-size:9.8px;font-weight:700;color:#fff;transform:scaleX(0.9881);">Other Suggestions</span>
<span style="left:502.7px;top:211.00px;font-size:9.8px;font-weight:400;color:#f0f0f0;transform:scaleX(0.9955);">Learn <u>m</u>ore</span>
<span style="left:458.7px;top:389.00px;font-size:9.8px;font-weight:400;color:#fff;transform:scaleX(1.0103);">Keep accessibility checker running while I work</span>
<span style="left:443.4px;top:407.00px;font-size:9.8px;font-weight:700;color:#fff;transform:scaleX(1.0029);">Additional Information</span>
<span style="left:452.9px;top:426.00px;font-size:9.8px;font-weight:700;color:#f4f4f4;transform:scaleX(0.9071);">Why Fix?</span>
<span style="left:452.9px;top:441.00px;font-size:9.0px;font-weight:400;color:#cecece;transform:scaleX(1.0987);">A table header row contains column headings that provide context and aid navigation of</span>
<span style="left:452.9px;top:453.00px;font-size:9.0px;font-weight:400;color:#cecece;transform:scaleX(1.1133);">the data in the table.</span>
<span style="left:452.9px;top:475.00px;font-size:9.8px;font-weight:700;color:#f4f4f4;transform:scaleX(0.8851);">Steps To Fix:</span>
<span style="left:452.9px;top:490.00px;font-size:9.0px;font-weight:400;color:#cecece;transform:scaleX(1.0728);">To set a header row</span>
<span style="left:452.9px;top:502.00px;font-size:9.0px;font-weight:400;color:#cecece;transform:scaleX(1.0710);">1. Select the table, then select the Design tab in Table Tools.</span>
<span style="left:452.9px;top:514.00px;font-size:9.0px;font-weight:400;color:#cecece;transform:scaleX(1.0707);">2. In the Table Style Options group, check Header Row.</span>
<svg style="left:792.3px;top:23.9px" width="11.8" height="7.6" viewBox="0 0 11.8 7.6"><path d="M0.875 0.875 L5.9 6.725 L10.925 0.875" stroke="#ececec" stroke-width="1.35" fill="none"/></svg>
<svg style="left:828px;top:23.2px" width="9.2" height="9.2" viewBox="0 0 9.2 9.2"><path d="M0.6 0.6 L8.6 8.6 M8.6 0.6 L0.6 8.6" stroke="#ececec" stroke-width="1.35" fill="none"/></svg>
<svg style="left:453.5px;top:103.2px" width="8.1" height="5.8" viewBox="0 0 8.1 5.8"><path d="M1.075 1.075 L4.05 4.725 L7.0249999999999995 1.075" stroke="#fff" stroke-width="1.75" fill="none"/></svg>
<svg style="left:827.8px;top:118.7px" width="8.3" height="5.3" viewBox="0 0 8.3 5.3"><path d="M1.0 1.0 L4.15 4.3 L7.300000000000001 1.0" stroke="#fff" stroke-width="1.6" fill="none"/></svg>
<svg style="left:827.8px;top:408.4px" width="8.7" height="5.6" viewBox="0 0 8.7 5.6"><path d="M1.075 1.075 L4.35 4.5249999999999995 L7.624999999999999 1.075" stroke="#fff" stroke-width="1.75" fill="none"/></svg>
<svg style="left:480px;top:205.4px" width="16.4" height="16.4" viewBox="0 0 16.4 16.4"><circle cx="8.2" cy="8.2" r="6.5" fill="none" stroke="#3196da" stroke-width="1.4"/><rect x="7.5" y="7.3" width="1.4" height="4.4" fill="#56b0ec"/><rect x="7.45" y="4.9" width="1.5" height="1.5" fill="#56b0ec"/></svg>
<svg style="left:443px;top:386px" width="11.2" height="11" viewBox="0 0 11.2 11"><rect x="0" y="0" width="11.2" height="11" fill="#2a8d59"/><rect x="0.5" y="0.5" width="10.2" height="10" fill="none" stroke="#1d6e44" stroke-width="1"/><path d="M2.9 5.5 L4.9 7.5 L8.6 3.6" stroke="#fff" stroke-width="1.4" fill="none"/></svg>
</div></body></html>
